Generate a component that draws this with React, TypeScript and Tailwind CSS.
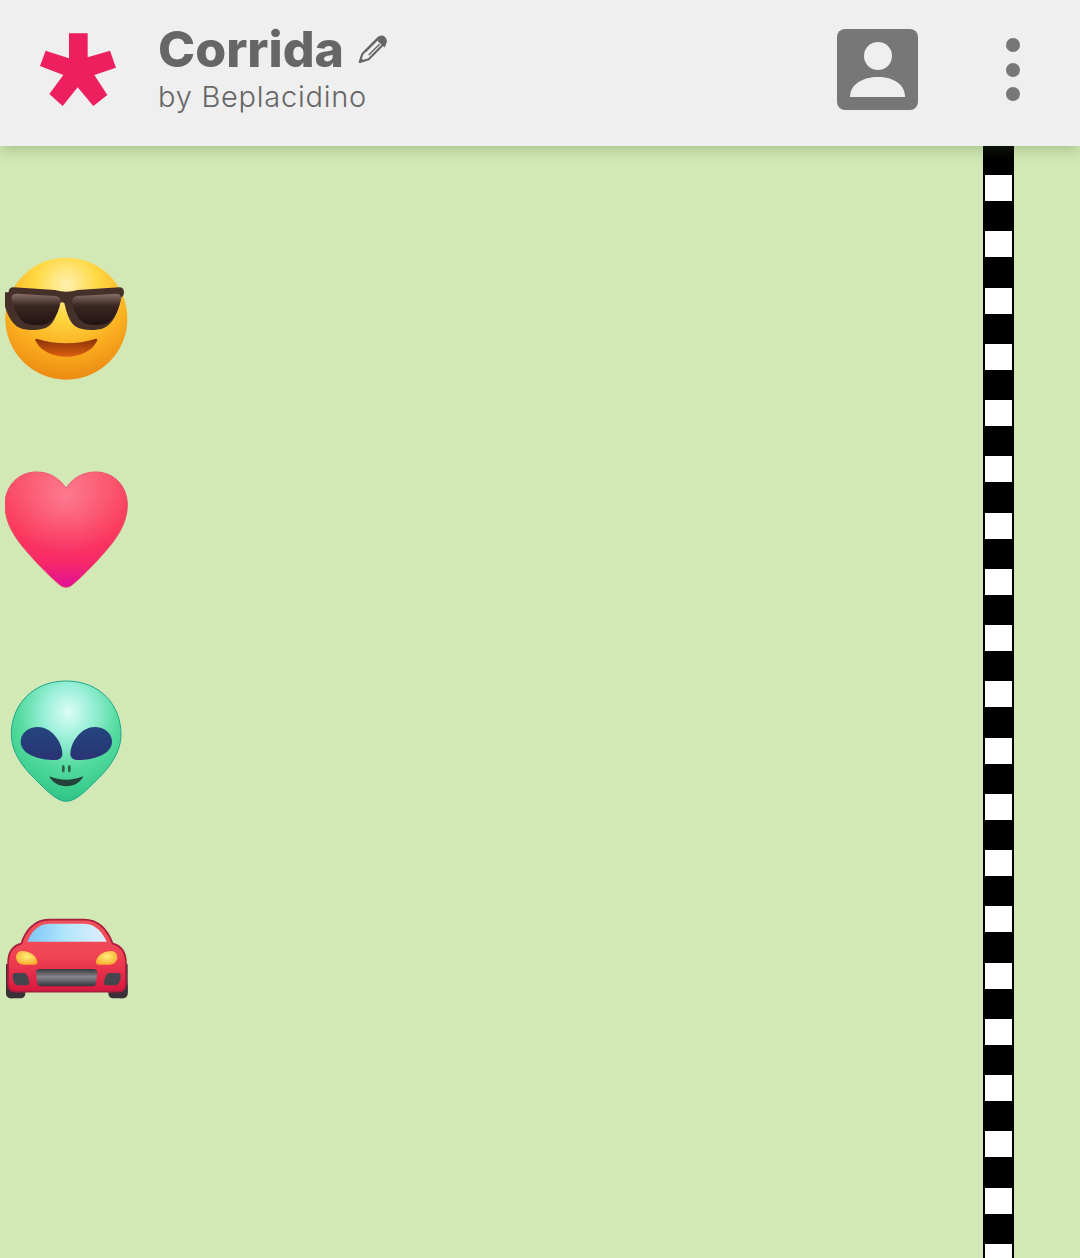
function Logo() {
  return (
    <svg width="78" height="74" viewBox="120 99 234 222" className="shrink-0">
      <polygon
        fill="#ee1f5f"
        points="207,100 263,100 263,172 330,152 348,203 283,225 322,285 280,318 233,262 188,318 148,282 190,225 120,198 137,152 207,175"
      />
    </svg>
  );
}

function Pencil() {
  return (
    <svg width="29" height="29" viewBox="1075 110 84 84" className="shrink-0">
      <path
        d="M1080 188l8-24 46-46c5-4 11-5 16-1 5 4 6 11 2 16l-46 47z"
        fill="#efefef"
        stroke="#666"
        strokeWidth="6"
        strokeLinejoin="round"
      />
      <path d="M1128 124l24 22 4-9c4-8 3-15-3-20-6-5-13-5-19 0z" fill="#666" />
      <path d="M1080 190l3-15 12 12z" fill="#666" />
      <path d="M1097 158l32-32M1106 168l32-32" stroke="#666" strokeWidth="4" />
    </svg>
  );
}

function Face() {
  return (
    <svg width="124" height="124" viewBox="15 36 372 372" className="blur-[0.5px]">
      <defs>
        <radialGradient id="fg" cx="50%" cy="22%" r="85%">
          <stop offset="0" stopColor="#fff0b0" />
          <stop offset="0.3" stopColor="#ffd944" />
          <stop offset="0.62" stopColor="#fbb020" />
          <stop offset="1" stopColor="#e98010" />
        </radialGradient>
        <linearGradient id="lens" x1="0" y1="0" x2="0" y2="1">
          <stop offset="0" stopColor="#8a7068" />
          <stop offset="0.38" stopColor="#3a2623" />
          <stop offset="1" stopColor="#221412" />
        </linearGradient>
        <linearGradient id="mouth" x1="0" y1="0" x2="0" y2="1">
          <stop offset="0" stopColor="#8a3208" />
          <stop offset="1" stopColor="#dc5f10" />
        </linearGradient>
      </defs>
      <circle cx="199" cy="221" r="183" fill="url(#fg)" />
      <path
        d="M26 142c0-10 5-15 14-15l125 8q34 10 68 0l125-8c9 0 14 5 14 15 0 8-4 14-10 17-5 40-23 78-50 90-25 9-66 9-86-5-18-12-27-44-33-70-5-3-9-3-14 0-6 26-15 58-33 70-20 14-61 14-86 5-27-12-45-50-50-90-6-3-10-9-10-17z"
        fill="#46302a"
      />
      <path
        d="M50 146l115 7c12 1 18 9 16 21-5 28-18 54-40 62-20 6-48 6-66-2-18-10-36-46-40-72-2-9 2-15 15-16z"
        fill="url(#lens)"
      />
      <path
        d="M348 146l-115 7c-12 1-18 9-16 21 5 28 18 54 40 62 20 6 48 6 66-2 18-10 36-46 40-72 2-9-2-15-15-16z"
        fill="url(#lens)"
      />
      <path
        d="M110 281c58 18 120 18 178 0 4 0 5 3 3 7-14 30-50 47-92 47s-78-17-92-47c-2-4-1-7 3-7z"
        fill="url(#mouth)"
      />
    </svg>
  );
}

function Heart() {
  const d =
    "M198 84C176 52 145 36 110 36 55 36 15 78 15 135c0 55 30 100 70 145 35 40 70 75 95 95 10 9 26 9 36 0 25-20 60-55 95-95 40-45 71-90 71-145 0-57-40-99-95-99-35 0-67 16-89 48z";
  return (
    <svg width="124" height="124" viewBox="15 21 372 372" className="blur-[0.5px]">
      <defs>
        <linearGradient id="hg" x1="0" y1="0" x2="0" y2="1">
          <stop offset="0" stopColor="#fb5068" />
          <stop offset="0.5" stopColor="#fb3a5c" />
          <stop offset="0.78" stopColor="#f72a68" />
          <stop offset="1" stopColor="#e00f98" />
        </linearGradient>
        <radialGradient id="hh" cx="50%" cy="22%" r="50%">
          <stop offset="0" stopColor="#ffffff" stopOpacity="0.28" />
          <stop offset="1" stopColor="#ffffff" stopOpacity="0" />
        </radialGradient>
      </defs>
      <path d={d} fill="url(#hg)" stroke="#e84a66" strokeWidth="3" />
      <path d={d} fill="url(#hh)" />
    </svg>
  );
}

function Alien() {
  return (
    <svg width="124" height="124" viewBox="15 21 372 372" className="overflow-visible blur-[0.5px]">
      <defs>
        <radialGradient id="ag" cx="52%" cy="26%" r="75%">
          <stop offset="0" stopColor="#dcfdf4" />
          <stop offset="0.28" stopColor="#9cf0da" />
          <stop offset="0.6" stopColor="#55dba0" />
          <stop offset="1" stopColor="#2cc484" />
        </radialGradient>
        <linearGradient id="eye" x1="0" y1="0" x2="0" y2="1">
          <stop offset="0" stopColor="#24457e" />
          <stop offset="1" stopColor="#2a3474" />
        </linearGradient>
      </defs>
      <path
        d="M199 30C100 30 34 100 34 190c0 52 33 98 73 136 30 30 63 65 92 65s62-35 92-65c40-38 72-84 72-136C363 100 298 30 199 30z"
        fill="url(#ag)"
        stroke="#1da58a"
        strokeWidth="3"
      />
      <path
        d="M62 212c0-26 24-44 52-44 36 0 70 38 73 78 1 14-8 21-22 21-50 0-103-18-103-55z"
        fill="url(#eye)"
      />
      <path
        d="M336 212c0-26-24-44-52-44-36 0-70 38-73 78-1 14 8 21 22 21 50 0 103-18 103-55z"
        fill="url(#eye)"
      />
      <ellipse cx="190" cy="293" rx="4" ry="11" fill="#2f5a48" />
      <ellipse cx="208" cy="293" rx="4" ry="11" fill="#2f5a48" />
      <path
        d="M148 316c32 14 68 14 102 0-8 18-28 30-51 30s-43-12-51-30z"
        fill="#24423a"
      />
    </svg>
  );
}

function Car() {
  return (
    <svg width="124" height="124" viewBox="15 -39 372 372" className="blur-[0.5px]">
      <defs>
        <linearGradient id="cb" x1="0" y1="0" x2="0" y2="1">
          <stop offset="0" stopColor="#f0525c" />
          <stop offset="0.5" stopColor="#f04454" />
          <stop offset="1" stopColor="#d8173f" />
        </linearGradient>
        <linearGradient id="cw" x1="0" y1="0" x2="1" y2="0">
          <stop offset="0" stopColor="#7cc6f6" />
          <stop offset="0.5" stopColor="#b4e6fb" />
          <stop offset="1" stopColor="#e0eefa" />
        </linearGradient>
        <linearGradient id="gr" x1="0" y1="0" x2="0" y2="1">
          <stop offset="0" stopColor="#35353c" />
          <stop offset="0.45" stopColor="#85858b" />
          <stop offset="1" stopColor="#35353c" />
        </linearGradient>
        <radialGradient id="hl" cx="50%" cy="40%" r="65%">
          <stop offset="0" stopColor="#fff07a" />
          <stop offset="1" stopColor="#f8a82c" />
        </radialGradient>
      </defs>
      <path d="M18 190h38v72c0 14-6 30-18 30-12 0-20-8-20-22z" fill="#3a3038" />
      <rect x="18" y="240" width="58" height="52" rx="14" fill="#3a3038" />
      <rect x="325" y="240" width="58" height="52" rx="14" fill="#3a3038" />
      <path d="M345 190h38v80c0 14-8 22-20 22-12 0-18-16-18-30z" fill="#3a3038" />
      <path
        d="M64 128c10-32 34-72 84-72h104c50 0 74 40 86 72 24 6 40 26 40 60v60c0 14-8 24-22 24H46c-14 0-22-10-22-24v-60c0-34 16-54 40-60z"
        fill="url(#cb)"
        stroke="#a81c3c"
        strokeWidth="5"
      />
      <path d="M82 122c10-26 30-54 66-54h104c36 0 56 28 68 54z" fill="url(#cw)" />
      <path
        d="M48 168c0-10 8-18 18-18 22 0 44 14 46 32 1 6-3 9-10 9H72c-14 0-24-10-24-23z"
        fill="url(#hl)"
      />
      <path
        d="M352 168c0-10-8-18-18-18-22 0-44 14-46 32-1 6 3 9 10 9h30c14 0 24-10 24-23z"
        fill="url(#hl)"
      />
      <path
        d="M108 212c1-5 5-8 12-8h160c7 0 11 3 12 8l-4 36c-1 5-5 8-12 8H124c-7 0-11-3-12-8z"
        fill="url(#gr)"
      />
      <path d="M38 224c0-5 3-8 8-8h26c8 0 14 14 16 28 1 6-2 9-8 9H54c-10 0-16-14-16-29z" fill="#45454d" />
      <path d="M362 224c0-5-3-8-8-8h-26c-8 0-14 14-16 28-1 6 2 9 8 9h26c10 0 16-14 16-29z" fill="#45454d" />
    </svg>
  );
}

const squares = Array.from({ length: 20 }, (_, i) => i);

export default function App() {
  return (
    <div className="flex h-[1258px] w-[1080px] flex-col overflow-hidden bg-[#d2e9b5]">
      <header className="relative z-10 flex h-[146px] shrink-0 items-center bg-[#efefef] pb-[7px] pl-[40px] pr-[60px] shadow-[0_3px_14px_rgba(60,90,30,0.3)]">
        <Logo />
        <div className="mb-[2px] ml-[40px] flex flex-col font-['Inter','Liberation_Sans',sans-serif]">
          <div className="flex h-[52px] items-center gap-[14px]">
            <span className="text-[50px] leading-[52px] font-extrabold tracking-[0px] text-[#666666]">Corrida</span>
            <Pencil />
          </div>
          <span className="mt-[5px] text-[29px] leading-[34px] font-light tracking-[0.75px] text-[#666666]">by Beplacidino</span>
        </div>
        <div className="ml-auto flex items-center gap-[88px]">
          <div className="flex h-[81px] w-[81px] items-center justify-center rounded-[8px] bg-[#777777]">
            <svg width="81" height="81" viewBox="0 0 81 81">
              <circle cx="41" cy="27" r="14" fill="#efefef" />
              <path d="M13 68c0-13 13-20 28-20s27 7 27 20z" fill="#efefef" />
            </svg>
          </div>
          <div className="flex flex-col gap-[10.5px]">
            <div className="h-[14px] w-[14px] rounded-full bg-[#777777]" />
            <div className="h-[14px] w-[14px] rounded-full bg-[#777777]" />
            <div className="h-[14px] w-[14px] rounded-full bg-[#777777]" />
          </div>
        </div>
      </header>
      <main className="flex min-h-0 flex-1 justify-between pl-[5px] pr-[66px]">
        <div className="flex flex-col gap-[86.3px] pt-[111px]">
          <Face />
          <Heart />
          <Alien />
          <Car />
        </div>
        <div className="flex w-[31px] flex-col items-center gap-[30.25px] bg-black pt-[29px]">
          {squares.map((i) => (
            <div key={i} className="h-[26px] w-[27px] shrink-0 bg-white" />
          ))}
        </div>
      </main>
    </div>
  );
}
